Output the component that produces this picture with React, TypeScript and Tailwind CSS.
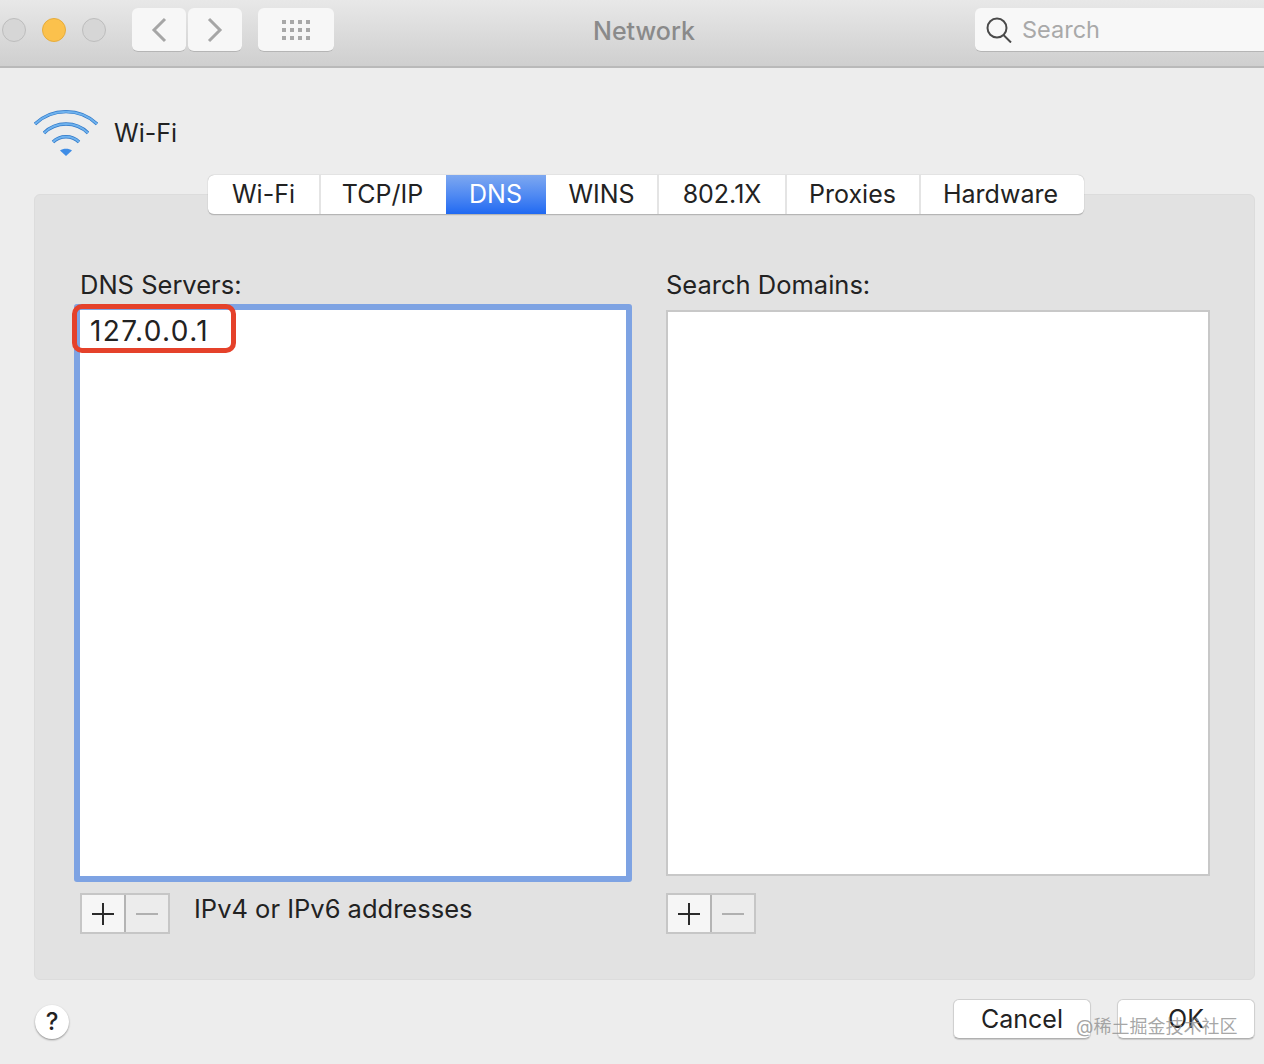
const font = { fontFamily: "Inter, 'Noto Sans CJK SC', sans-serif" };

const tabs = [
  { label: "Wi-Fi", w: "w-[113px]" },
  { label: "TCP/IP", w: "w-[125px] pr-[2px]" },
  { label: "DNS", w: "w-[100px]", active: true },
  { label: "WINS", w: "w-[113px]" },
  { label: "802.1X", w: "w-[128px]" },
  { label: "Proxies", w: "w-[134px] pr-[1px]" },
  { label: "Hardware", w: "w-[163px] pr-[4px]" },
];

const WifiIcon = () => (
  <svg width="66" height="50" viewBox="0 0 66 50" fill="none">
    <path d="M2 16C19 -0.5 47 -0.5 64 16" stroke="#2f78c8" strokeWidth="3.4" />
    <path d="M2 16C19 -0.5 47 -0.5 64 16" stroke="#6fb2ee" strokeWidth="2" />
    <path d="M11 25C23 13 43 13 55 25" stroke="#2f78c8" strokeWidth="3.4" />
    <path d="M11 25C23 13 43 13 55 25" stroke="#6fb2ee" strokeWidth="2" />
    <path d="M20 34C27 27 39 27 46 34" stroke="#2f78c8" strokeWidth="3.4" />
    <path d="M20 34C27 27 39 27 46 34" stroke="#6fb2ee" strokeWidth="2" />
    <path d="M27 42.5C30 40 36 40 39 42.5L33 48Z" fill="#3f8de6" />
  </svg>
);

const GridIcon = () => (
  <svg width="30" height="22" viewBox="0 0 30 22" fill="#a8a8a8">
    {[0, 8, 16].map((y) =>
      [0, 8, 16, 24].map((x) => <rect key={`${x}-${y}`} x={x + 1} y={y + 1} width="4" height="4" />)
    )}
  </svg>
);

const PlusMinus = () => (
  <div className="flex h-[41px] w-[90px] border-2 border-[#c6c6c6]">
    <div className="flex w-[44px] items-center justify-center border-r-2 border-[#b4b4b4] bg-[#f6f6f6]">
      <svg width="24" height="24" viewBox="0 0 24 24" stroke="#2a2a2a" strokeWidth="2">
        <path d="M12 1V23M1 12H23" />
      </svg>
    </div>
    <div className="flex flex-1 items-center justify-center bg-[#ececec]">
      <svg width="24" height="24" viewBox="0 0 24 24" stroke="#b0b0b0" strokeWidth="2">
        <path d="M1 12H23" />
      </svg>
    </div>
  </div>
);

const FooterButton = ({ label }: { label: string }) => (
  <button className="h-[40px] w-[138px] rounded-md border border-[#d0d0d0] border-b-[#b0b0b0] bg-white text-[25px] leading-none text-[#222] shadow-[0_1px_1px_rgba(0,0,0,0.15)]">
    {label}
  </button>
);

export default function App() {
  return (
    <div className="relative h-[1064px] w-[1264px] overflow-hidden bg-[#ededed] text-[#222]" style={font}>
      {/* title bar */}
      <div className="relative flex h-[68px] items-center border-b-2 border-[#b9b9b9] bg-gradient-to-b from-[#e8e8e8] to-[#cfcfcf] pb-[6px] pl-[2px]">
        <div className="flex gap-[16px]">
          <span className="size-6 rounded-full border border-[#bdbdbd] bg-[#d6d6d6]" />
          <span className="size-6 rounded-full border border-[#e6ac3c] bg-[#fbc14c]" />
          <span className="size-6 rounded-full border border-[#bdbdbd] bg-[#d6d6d6]" />
        </div>
        <div className="ml-[26px] flex gap-[2px]">
          <button className="flex h-[44px] w-[54px] items-center justify-center rounded-md border-b border-[#b5b5b5] bg-[#f7f7f7]">
            <svg width="16" height="26" viewBox="0 0 16 26" fill="none" stroke="#a6a6a6" strokeWidth="3">
              <path d="M14 2L3 13L14 24" />
            </svg>
          </button>
          <button className="flex h-[44px] w-[54px] items-center justify-center rounded-md border-b border-[#b5b5b5] bg-[#f7f7f7]">
            <svg width="16" height="26" viewBox="0 0 16 26" fill="none" stroke="#a6a6a6" strokeWidth="3">
              <path d="M2 2L13 13L2 24" />
            </svg>
          </button>
        </div>
        <button className="ml-[16px] flex h-[44px] w-[76px] items-center justify-center rounded-md border-b border-[#b5b5b5] bg-[#f7f7f7]">
          <GridIcon />
        </button>
        <span className="ml-[259px] mt-[4px] text-[25px] font-medium text-[#8a8a8a]">Network</span>
        <div className="ml-auto -mr-[4px] flex h-[44px] w-[293px] items-center gap-[10px] rounded-md border-b border-[#b5b5b5] bg-[#f8f8f8] pl-[11px]">
          <svg width="26" height="26" viewBox="0 0 26 26" fill="none" stroke="#4a4a4a" strokeWidth="2">
            <circle cx="11" cy="11" r="9.5" />
            <path d="M17.5 18L25 25.5" />
          </svg>
          <span className="text-[23.5px] leading-none text-[#a9a9a9]">Search</span>
        </div>
      </div>

      {/* wifi header */}
      <div className="flex h-[107px] items-start pl-[33px] pt-[40px]">
        <WifiIcon />
        <span className="ml-[15px] mt-[6px] text-[25px] leading-[38px]">Wi-Fi</span>
      </div>

      {/* tabs */}
      <div className="relative z-10 -mb-[21px] ml-[208px] flex h-[40px] w-[876px] overflow-hidden rounded-md border-b border-[#b5b5b5] bg-white shadow-[0_0_1px_rgba(0,0,0,0.4)]">
        {tabs.map((t, i) => (
          <div
            key={t.label}
            className={
              t.active
                ? "flex h-full w-[100px] items-center justify-center bg-gradient-to-b from-[#7ea8f0] to-[#1f69f2] pr-[1px] text-[25px] text-white"
                : `flex h-full ${t.w} items-center justify-center text-[25px] ${i < tabs.length - 1 && !tabs[i + 1].active ? "border-r-2 border-[#e4e4e4]" : ""}`
            }
          >
            {t.label}
          </div>
        ))}
      </div>

      {/* panel */}
      <div className="ml-[34px] h-[786px] w-[1221px] rounded-md border border-[#dcdcdc] bg-[#e2e2e2] pl-[45px] pt-[71px]">
        <div className="flex">
          <div className="w-[586px]">
            <div className="h-[38px] text-[25.5px] leading-[38px]">DNS Servers:</div>
            <div className="relative -ml-[6px] h-[578px] w-[558px] rounded-[3px] border-[6px] border-[#7ea3e3] bg-white">
              <div className="pl-[10px] pt-[3px] text-[28px] leading-[36px] tracking-[1.4px]">127.0.0.1</div>
              <div className="absolute -left-[8px] -top-[6px] h-[49px] w-[164px] rounded-[10px] border-[5px] border-[#e5412a]" />
            </div>
            <div className="mt-[11px] flex">
              <PlusMinus />
              <span className="ml-[24px] -mt-[2px] text-[25.5px] leading-[36px]">IPv4 or IPv6 addresses</span>
            </div>
          </div>
          <div className="w-[544px]">
            <div className="h-[44px] text-[25.5px] leading-[38px]">Search Domains:</div>
            <div className="h-[566px] w-[544px] border-2 border-[#c8c8c8] bg-white" />
            <div className="mt-[17px]">
              <PlusMinus />
            </div>
          </div>
        </div>
      </div>

      {/* footer */}
      <div className="flex items-start pl-[35px] pt-[19px]">
        <div className="mt-[6px] flex size-[34px] items-center justify-center rounded-full bg-white text-[24px] font-medium shadow-[0_1px_2px_rgba(0,0,0,0.4)]">
          ?
        </div>
        <div className="ml-[884px] flex gap-[26px]">
          <FooterButton label="Cancel" />
          <FooterButton label="OK" />
        </div>
      </div>

      {/* watermark */}
      <span className="absolute left-[1076px] top-[1015px] text-[18px] leading-[24px] text-[#8f8f8f]/80">@稀土掘金技术社区</span>
    </div>
  );
}
